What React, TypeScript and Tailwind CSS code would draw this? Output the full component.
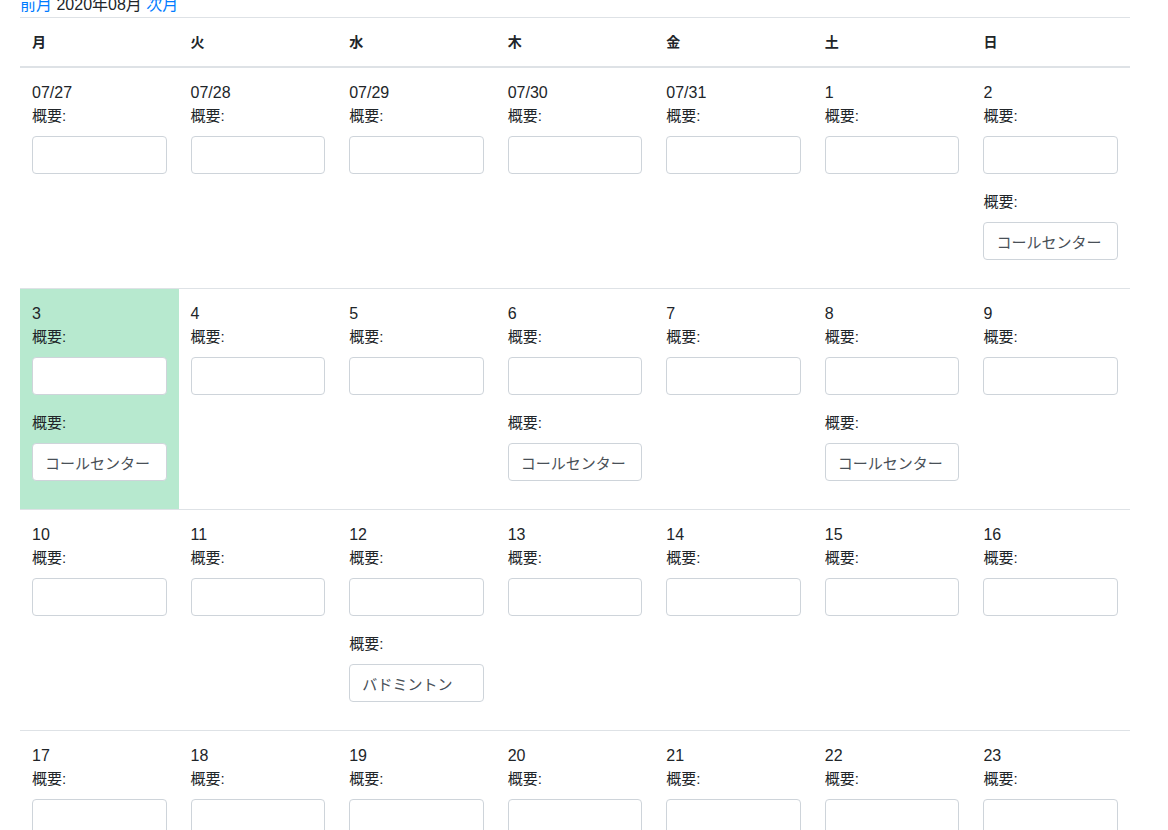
import React from "react";

type Day = { label: string; entries: string[]; today?: boolean };

const extra: Record<string, string[]> = {
  "2": ["", "コールセンター"],
  "3": ["", "コールセンター"],
  "6": ["", "コールセンター"],
  "8": ["", "コールセンター"],
  "12": ["", "バドミントン"],
};

function buildWeeks(): Day[][] {
  const days: Day[] = [];
  ["07/27", "07/28", "07/29", "07/30", "07/31"].forEach((d) => days.push({ label: d, entries: [""] }));
  for (let i = 1; i <= 31; i++) {
    const key = String(i);
    days.push({ label: key, entries: extra[key] ?? [""], today: i === 3 });
  }
  for (let i = 1; i <= 6; i++) days.push({ label: `09/0${i}`, entries: [""] });
  const weeks: Day[][] = [];
  for (let i = 0; i < days.length; i += 7) weeks.push(days.slice(i, i + 7));
  return weeks;
}

const headers = ["月", "火", "水", "木", "金", "土", "日"];

function Entry({ value }: { value: string }) {
  return (
    <div className="mb-4">
      <label className="mb-2 block text-[15px] leading-6 text-[#212529]">概要:</label>
      <input
        type="text"
        defaultValue={value}
        className="block h-[38px] w-full rounded border border-[#ced4da] bg-white px-3 text-[15px] text-[#495057] outline-none"
      />
    </div>
  );
}

export default function App() {
  const weeks = buildWeeks();
  return (
    <div
      className="min-h-screen bg-white text-[16px] leading-6 text-[#212529]"
      style={{ fontFamily: '"Liberation Sans", "Noto Sans CJK JP", sans-serif' }}
    >
      <div className="ml-5 w-[1110px]">
        <div className="-mt-[7px] h-6">
          <a href="#" className="text-[#007bff]">前月</a> 2020年08月{" "}
          <a href="#" className="text-[#007bff]">次月</a>
        </div>

        {/* header */}
        <div className="grid grid-cols-7 border-t border-b-2 border-[#dee2e6]">
          {headers.map((h) => (
            <div key={h} className="p-3 text-[14px] font-bold">
              {h}
            </div>
          ))}
        </div>

        {/* weeks */}
        {weeks.map((week, wi) => (
          <div key={wi} className={`grid grid-cols-7 border-[#dee2e6] ${wi === 0 ? "" : "border-t"}`}>
            {week.map((d) => (
              <div key={d.label} className={`px-3 pt-3 pb-3 ${d.today ? "bg-[#b7e9cf]" : ""}`}>
                <div className="h-6 pt-px">{d.label}</div>
                {d.entries.map((e, i) => (
                  <Entry key={i} value={e} />
                ))}
              </div>
            ))}
          </div>
        ))}
      </div>
    </div>
  );
}
